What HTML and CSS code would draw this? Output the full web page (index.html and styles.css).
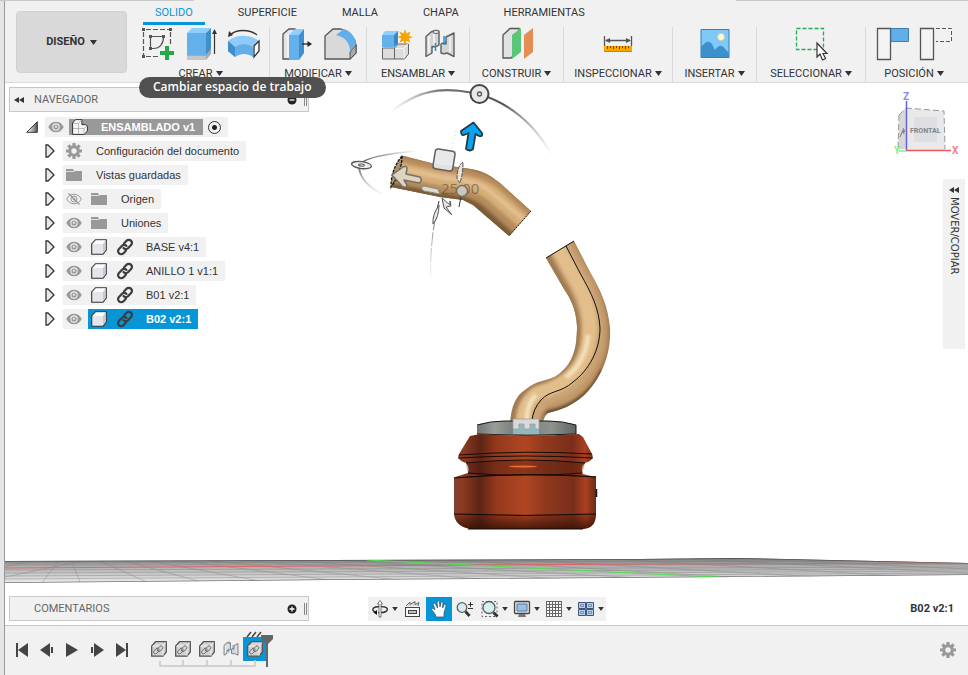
FILE: index.html
```html
<!DOCTYPE html>
<html lang="es">
<head>
<meta charset="utf-8">
<meta name="viewport" content="width=device-width, initial-scale=1">
<title>ENSAMBLADO v1</title>
<link rel="stylesheet" href="styles.css">
</head>
<body>
<svg class="defs" aria-hidden="true">
  <symbol id="caret" viewBox="0 0 7 5"><path d="M0 0h7L3.500 5z" fill="#333"/></symbol>
  <symbol id="rewind" viewBox="0 0 10 6"><path d="M5 0v6L0 3zM10 0v6L5 3z" fill="#333"/></symbol>
  <symbol id="expand" viewBox="0 0 10 14"><path d="M1 1h2l6 6-6 6H1z" fill="#e8e9ee" stroke="#333" stroke-width="1.300"/></symbol>
  <symbol id="eye" viewBox="0 0 16 12"><path d="M.3 6C2 2.500 4.800.7 8 .7s6 1.800 7.700 5.300C14 9.500 11.200 11.300 8 11.300S2 9.500.3 6z" fill="#999"/><circle cx="8" cy="6" r="3.700" fill="#f1f1f1"/><circle cx="8" cy="6" r="2.600" fill="#999"/><circle cx="8" cy="5.800" r="1.200" fill="#e2e2e2"/></symbol>
  <symbol id="eye-off" viewBox="0 0 16 12"><g fill="none" stroke="#999"><path d="M.7 6C2.300 2.800 5 1.200 8 1.200s5.700 1.600 7.300 4.800C13.700 9.200 11 10.800 8 10.800S2.300 9.200.7 6z"/><circle cx="8" cy="6" r="3"/><circle cx="8" cy="6" r="1"/><path d="M2.500.5l11 11" stroke-width="1.300"/></g></symbol>
  <symbol id="folder" viewBox="0 0 16 14"><path d="M0 1h7l1 2H0zM0 4h8l1-1h7v10H0z" fill="#999"/><path d="M0 3.500h8" stroke="#ddd"/></symbol>
  <symbol id="gear" viewBox="0 0 16 16"><g fill="#999"><path d="M6.400 0h3.200v16H6.400zM0 6.400h16v3.200H0z"/><path d="M6.400 0h3.200v16H6.400zM0 6.400h16v3.200H0z" transform="rotate(45 8 8)"/><circle cx="8" cy="8" r="5.800"/></g><circle cx="8" cy="8" r="2.700" fill="#f1f1f1"/></symbol>
  <symbol id="body" viewBox="0 0 16 16"><path d="M.7 15.300V5L4.500.7h10.800V11L12 15.300z" fill="#e4e6ec" stroke="#333" stroke-width="1.100"/><path d="M1.500 5L5 1.500h9.500L11.500 5z" fill="#fff"/><path d="M12 5l2.700-3.500v9.200L12 14z" fill="#c6cad3"/></symbol>
  <symbol id="link" viewBox="0 0 18 18"><g fill="none" stroke="#3d3d3d" stroke-width="2.200" stroke-linecap="round"><path d="M8 5.500l2.500-2.700a3.100 3.100 0 0 1 4.600 4.300L12 10.300a3.100 3.100 0 0 1-4.500-.3"/><path d="M10 12.500l-2.500 2.700a3.100 3.100 0 0 1-4.600-4.300L6 7.700a3.100 3.100 0 0 1 4.500.3"/></g></symbol>
  <symbol id="component" viewBox="0 0 16 16"><path d="M.7 15.200V5L4.500.7h10.800V11L12 15.200z" fill="#d4d4d4" stroke="#555" stroke-width="1.300"/><path d="M12 5l3-3.500M1.500 5H12v10" stroke="#f5f5f5" fill="none" stroke-width=".8"/><g fill="none" stroke="#666" stroke-width=".9"><rect x="-2" y="-1.500" width="6.500" height="3.600" rx="1.800" transform="translate(4.300 10.800) rotate(-48)"/><rect x="-2" y="-1.500" width="6.500" height="3.600" rx="1.800" transform="translate(8 8.500) rotate(-48)"/></g></symbol>
  <symbol id="joint" viewBox="0 0 32 32"><g fill="#d4d4d4" stroke="#606060" stroke-width="1.400" stroke-linejoin="round"><path d="M2 28.500V8.500L7 4l4-1.500h2l2 1V17q-3 2.500-7 1.500V25z"/><path d="M30 28.500V5L22 9v7q-2-2-5 0v9q3 1.500 6 0z"/></g><path d="M5 8v17M10 5v12M26 9v15" stroke="#f7f7f7" stroke-width="1.500"/><path d="M11.500 15v8M20 8v9" stroke="#1793e0" stroke-width="1.500"/><ellipse cx="12" cy="4" rx="3" ry="1.500" fill="#eee" stroke="#666"/></symbol>
</svg>

<div class="app">
<header class="ribbon">
  <div class="workspace-wrap">
    <button class="workspace" type="button" aria-describedby="tip">DISEÑO <svg class="caret"><use href="#caret"/></svg></button>
    <div class="tooltip" id="tip" role="tooltip">Cambiar espacio de trabajo</div>
  </div>
  <div class="ribbon-main">
    <nav class="tabs">
      <a class="active" href="#solido">SOLIDO</a><a href="#superficie">SUPERFICIE</a><a href="#malla">MALLA</a><a href="#chapa">CHAPA</a><a href="#herramientas">HERRAMIENTAS</a>
    </nav>
    <div class="groups">
      <section class="group">
        <div class="tools">
          <button type="button" aria-label="Crear boceto"><svg viewBox="0 0 32 32"><g fill="none" stroke="#555" stroke-width="1.200"><path d="M4 1.500h23M1.500 4v23M28.500 4v12M4 28.500h13" stroke-dasharray="5 2"/><path d="M8.500 9v11.500h3M8.500 8.500h13M21.500 9c0 7-4 11.500-10 11.500"/></g><g fill="#555"><path d="M0 0h3v3H0zM27 0h3v3h-3zM0 27h3v3H0zM7 7h3v3H7zM20 7h3v3h-3zM7 19h3v3H7z"/></g><path d="M18 23h5v-5h4v5h5v4h-5v5h-4v-5h-5z" fill="#23a84b"/></svg></button>
          <button type="button" aria-label="Extruir"><svg viewBox="0 0 32 32"><path d="M2 27h19l5-6v5l-5 6H2z" fill="#a9a9a9"/><path d="M2 28h19v4H2z" fill="#c6c6c6"/><path d="M2 5h19v22H2z" fill="#64b0ea"/><path d="M2 5l5-5h19l-5 5z" fill="#8fcfff"/><path d="M21 5l5-5v21l-5 6z" fill="#3e8fcd"/><path d="M29.500 26V3" stroke="#333" stroke-width="1.200"/><path d="M27 6l2.500-5L32 6z" fill="#333"/></svg></button>
          <button type="button" aria-label="Revolución"><svg viewBox="0 0 32 32"><path d="M2 7C8 1 22 1 29 7" fill="none" stroke="#333" stroke-width="1.300"/><path d="M0 9l1-6 4 4z" fill="#333"/><path d="M0 13C8 6 22 6 31 13l-6 6c-5-4-13-4-18 0z" fill="#8fcbfa"/><path d="M0 13l7 6c5-4 13-4 18 0v10c-5-4-13-4-18 0l-7-6z" fill="#62aee8"/><path d="M0 13l7 6v10l-7-6z" fill="#3d8fcc"/><path d="M26 18l5-5v10l-5 6z" fill="#fafafa" stroke="#333" stroke-width="1.300"/></svg></button>
        </div>
        <button class="label" type="button">CREAR <svg class="caret"><use href="#caret"/></svg></button>
      </section>
      <section class="group">
        <div class="tools">
          <button type="button" aria-label="Pulsar/tirar"><svg viewBox="0 0 32 32"><path d="M2 31V6l6-5h6v30z" fill="#e5e5e5" stroke="#555" stroke-width="1.300"/><path d="M7 6v24" stroke="#fff"/><path d="M8 7h10v25H8z" fill="#64b0ea"/><path d="M8 7l6-6h9l-5 6z" fill="#8fcfff"/><path d="M18 7l5-6v24l-5 7z" fill="#3e8fcd"/><path d="M21 16h7" stroke="#222" stroke-width="1.300"/><path d="M26.500 13l4.500 3-4.500 3z" fill="#222"/></svg></button>
          <button type="button" aria-label="Empalme"><svg viewBox="0 0 32 32"><path d="M1 31V8l8-7h8c9 3 14 9 15 16v8l-6 6z" fill="#dcdcdc" stroke="#555" stroke-width="1.300"/><path d="M2 8h11c7 1 12 6 12 15v7H2z" fill="#d9d9d9"/><path d="M12 7l8-6c7 2 11 8 12 15l-6 7c0-8-5-14-14-16z" fill="#62aee8"/><path d="M26 24l6-7v8l-6 6z" fill="#aaa" stroke="#555"/></svg></button>
        </div>
        <button class="label" type="button">MODIFICAR <svg class="caret"><use href="#caret"/></svg></button>
      </section>
      <section class="group">
        <div class="tools">
          <button type="button" aria-label="Nuevo componente"><svg viewBox="0 0 32 32"><path d="M1.500 20h12v11h-12z" fill="#dcdcdc" stroke="#666"/><path d="M13.500 20l4-4h10v10l-4 5h-10z" fill="#dcdcdc" stroke="#666"/><path d="M14 20.500h9v10M23 20l4-4" fill="none" stroke="#f6f6f6"/><path d="M1 7h12v12H1z" fill="#64b0ea"/><path d="M1 7l3-4h14l-5 4z" fill="#8fcfff"/><path d="M13 7l4-4v13l-4 3z" fill="#3888c7"/><path d="M24 1l1.500 4.500 4.200-2-2 4.200L32 9l-4.300 1.500 2 4.200-4.200-2L24 17l-1.500-4.300-4.200 2 2-4.200L16 9l4.300-1.300-2-4.200 4.200 2z" fill="#f5a300"/></svg></button>
          <button type="button" aria-label="Unión"><svg viewBox="0 0 32 32"><use href="#joint" width="32" height="32"/></svg></button>
        </div>
        <button class="label" type="button">ENSAMBLAR <svg class="caret"><use href="#caret"/></svg></button>
      </section>
      <section class="group">
        <div class="tools">
          <button type="button" aria-label="Plano de desfase"><svg viewBox="0 0 32 32"><path d="M2 30V7l7-6.500h9V23l-8 7z" fill="#e2e2e2" stroke="#555" stroke-width="1.300"/><path d="M11 7l9-7v24l-9 7z" fill="#59c67a"/><path d="M23 7l9-7v24l-9 7z" fill="#e58d55"/></svg></button>
        </div>
        <button class="label" type="button">CONSTRUIR <svg class="caret"><use href="#caret"/></svg></button>
      </section>
      <section class="group">
        <div class="tools">
          <button type="button" aria-label="Medir"><svg viewBox="0 0 32 32"><path d="M2.500 8v10M29.500 8v10M4 12.500h24" stroke="#555" stroke-width="1.300"/><path d="M3 12.500l5-2.500v5zM29 12.500l-5-2.500v5z" fill="#555"/><path d="M2 18h28v6H2z" fill="#f8a500"/><path d="M2 23.500h28" stroke="#d98400"/><path d="M5.500 18v3M8.500 18v2M11.500 18v3M14.500 18v2M17.500 18v3M20.500 18v2M23.500 18v3M26.500 18v2" stroke="#704a00"/></svg></button>
        </div>
        <button class="label" type="button">INSPECCIONAR <svg class="caret"><use href="#caret"/></svg></button>
      </section>
      <section class="group">
        <div class="tools">
          <button type="button" aria-label="Insertar imagen"><svg viewBox="0 0 32 32"><path d="M2 1.500h28v28H2z" fill="#80c8fa" stroke="#2f80bd"/><path d="M2 19c7-8 10-7 14 3 6-8 8-3 14 3v4H2z" fill="#3c90cc"/><circle cx="22" cy="9" r="3.500" fill="#fffad5" stroke="#d4cc96" stroke-width=".7"/></svg></button>
        </div>
        <button class="label" type="button">INSERTAR <svg class="caret"><use href="#caret"/></svg></button>
      </section>
      <section class="group">
        <div class="tools">
          <button type="button" aria-label="Seleccionar"><svg viewBox="0 0 32 32"><rect x="1.500" y=".5" width="27" height="21" fill="none" stroke="#25ac54" stroke-width="1.300" stroke-dasharray="4 2"/><path d="M22 15v14l3-3 2.500 6 3-1.500-2.500-5h4z" fill="#fff" stroke="#333" stroke-width="1.200"/></svg></button>
        </div>
        <button class="label" type="button">SELECCIONAR <svg class="caret"><use href="#caret"/></svg></button>
      </section>
      <section class="group">
        <div class="tools">
          <button type="button" aria-label="Capturar posición"><svg viewBox="0 0 32 32"><path d="M.5.500h13v31H.5z" fill="#f4f4f4" stroke="#555" stroke-width="1.300"/><path d="M14 .5h17.500v13H14z" fill="#62aee8" stroke="#3b80b5"/></svg></button>
          <button type="button" aria-label="Revertir posición"><svg viewBox="0 0 32 32"><path d="M.5.500h13v31H.5z" fill="#f4f4f4" stroke="#555" stroke-width="1.300"/><path d="M16 .5h15.500v13H16" fill="none" stroke="#555" stroke-dasharray="4 2"/></svg></button>
        </div>
        <button class="label" type="button">POSICIÓN <svg class="caret"><use href="#caret"/></svg></button>
      </section>
    </div>
  </div>
</header>

<main class="viewport">
  <svg class="scene" viewBox="5 83 963 542" role="img" aria-label="Vista frontal del ensamblado">
    <defs>
      <linearGradient id="red" x1="0" x2="1" y1="0" y2="0"><stop offset="0" stop-color="#7e4535"/><stop offset=".06" stop-color="#8e3920"/><stop offset=".18" stop-color="#5b2516"/><stop offset=".3" stop-color="#96391c"/><stop offset=".5" stop-color="#b04622"/><stop offset=".65" stop-color="#8f381d"/><stop offset=".84" stop-color="#7a2e1a"/><stop offset=".93" stop-color="#aa4120"/><stop offset="1" stop-color="#6a2919"/></linearGradient>
      <linearGradient id="foot" x1="0" x2="0" y1="0" y2="1"><stop offset="0" stop-color="#2c0c03" stop-opacity=".1"/><stop offset="1" stop-color="#2c0c03" stop-opacity=".75"/></linearGradient>
      <linearGradient id="ring" x1="0" x2="1" y1="0" y2="0"><stop offset="0" stop-color="#737775"/><stop offset=".18" stop-color="#999d98"/><stop offset=".4" stop-color="#777b78"/><stop offset=".75" stop-color="#8e928e"/><stop offset="1" stop-color="#606462"/></linearGradient>
      <linearGradient id="floor" x1="0" x2="0" y1="0" y2="1"><stop offset="0" stop-color="#777"/><stop offset=".3" stop-color="#aaa"/><stop offset="1" stop-color="#f0f0f0"/></linearGradient>
      <linearGradient id="fadeArc" gradientUnits="userSpaceOnUse" x1="391" y1="0" x2="552" y2="0"><stop offset="0" stop-color="#888" stop-opacity="0"/><stop offset=".3" stop-color="#777"/><stop offset=".7" stop-color="#555"/><stop offset="1" stop-color="#777" stop-opacity="0"/></linearGradient>
      <linearGradient id="fadeSide" gradientUnits="userSpaceOnUse" x1="358" y1="0" x2="418" y2="0"><stop offset="0" stop-color="#555"/><stop offset=".3" stop-color="#888"/><stop offset="1" stop-color="#aaa" stop-opacity="0"/></linearGradient>
      <linearGradient id="fadeLow" gradientUnits="userSpaceOnUse" x1="0" y1="165" x2="0" y2="196"><stop offset="0" stop-color="#666"/><stop offset="1" stop-color="#aaa" stop-opacity="0"/></linearGradient>
      <linearGradient id="fadeDown" x1="0" x2="0" gradientUnits="userSpaceOnUse" y1="200" y2="285"><stop offset="0" stop-color="#333"/><stop offset="1" stop-color="#999" stop-opacity="0"/></linearGradient>
      <filter id="soft" x="-10%" y="-10%" width="120%" height="120%"><feGaussianBlur stdDeviation="1.500"/></filter>
      <clipPath id="upper"><path d="M402 155.500L435 164 465 168C482 170 490 175 500 183L531 211 509 236 473 205 463 200 440 197 391 187z"/></clipPath>
      <clipPath id="lower"><path d="M546 258L574 241 590 272C601 291 608 306 610 328C611 347 606 365 597 379C587 395 574 407 548 413Q544 416 543 423H510C511 407 516 395 525 390C539 378 550 382 560 373C574 362 577 345 577 326C576 308 570 298 564 289z"/></clipPath>
      <clipPath id="floorClip"><path d="M5 561L330 560 640 559 735 558 968 563V575L735 577 330 580 5 583z"/></clipPath>
    </defs>

    <g clip-path="url(#floorClip)">
      <path d="M5 557H968V584H5z" fill="url(#floor)"/>
      <g stroke="#777" stroke-width=".6" fill="none" opacity=".65">
        <path d="M5 563L968 561M5 565L968 564M5 570L968 567M5 573L968 569M5 576L968 571M5 579L968 573"/>
        <path d="M5 567L30 561M5 577L82 561M42 583L58 561M80 582L72 561M147 582L100 561M198 581L125 561M260 581L150 561M330 580L175 560M400 580L205 560M480 579L240 560M560 579L280 560M640 578L330 560M730 577L450 560M820 577L520 560M900 576L610 559M968 573L690 559M968 569L750 559"/>
      </g>
      <path d="M5 561L330 560 640 559 735 558 968 563" fill="none" stroke="#555" stroke-width="1.500"/>
      <path d="M5 583L330 580 735 577 968 575" fill="none" stroke="#777" stroke-width="1.500"/>
      <path d="M5 568L330 566 640 564 968 563" stroke="#e06464" fill="none"/>
      <path d="M367 560L735 578" stroke="#4fe04f"/>
    </g>

    <g clip-path="url(#lower)">
      <path d="M500 235H620V430H500z" fill="#a07c54"/>
      <g fill="none" filter="url(#soft)">
        <path d="M560 246L581 284C592 304 596 326 592 348C585 382 562 393 545 397C531 401 527 412 527 428" stroke="#cba474" stroke-width="25"/>
        <path d="M558 248L580 287C590 307 592 326 588 345C581 373 562 386 543 391C528 395 523 411 523 428" stroke="#e2be8b" stroke-width="14"/>
        <path d="M571 242L594 284C604 305 608 325 604 348C596 382 574 399 546 407" stroke="#c29869" stroke-width="5"/>
        <path d="M588 335C587 352 579 368 566 377M528 428C525 414 528 403 536 395" stroke="#f5e5bd" stroke-width="4"/>
        <path d="M603 370C592 397 568 410 546 413" stroke="#6e5130" stroke-width="6"/>
        <path d="M548 259L566 290C574 305 578 320 577 340" stroke="#a17b50" stroke-width="6"/>
      </g>
    </g>
    <path d="M546 258L574 241M566 246L580 273C592 294 599 309 600 328C600 350 589 370 573 382C561 393 550 390 541 400Q533 409 532 421" fill="none" stroke="#111"/>

    <path d="M477 425Q490 421 505 421H548Q563 421 576 425V434Q526 437 477 434z" fill="url(#ring)"/>
    <path d="M477 425Q490 421 505 421H513M539 421H548Q563 421 576 425V434M477 434Q526 437 576 434" fill="none" stroke="#181818"/>
    <path d="M513 419H539V434H513z" fill="#8fbabd"/>
    <path d="M513 419H539V429H535V424H530V429H524V424H519V429H513z" fill="#d9d9d9" stroke="#a0a0a0" stroke-width=".8"/>

    <path d="M470 436L480 434Q526 437 579 434L583 437 592 454Q595 460 585 463Q580 467 583 474L595 477Q526 484 455 477L468 473Q470 467 466 463Q456 460 459 454z" fill="url(#red)"/>
    <path d="M466 464Q526 457 585 463L582 474Q526 479 468 474z" fill="#481a0d" opacity=".35"/>
    <ellipse cx="523" cy="466.500" rx="14" ry="1" fill="#ed6b2e"/>
    <path d="M459 455Q526 450 592 454M458 458Q526 454 593 458M466 463Q526 457 585 463M468 473Q526 478 582 473M454 478Q526 472 596 477" stroke="#180b07" fill="none"/>
    <path d="M454 478Q526 473 596 477V514Q596 528 583 529H470Q455 526 454 514z" fill="url(#red)"/>
    <path d="M454 514H596Q596 528 583 529H470Q455 526 454 514z" fill="url(#foot)"/>
    <path d="M454 478Q526 472 596 477M454 514Q526 517 596 514M468 529H583" fill="none" stroke="#120804"/>
    <path d="M596.500 489v8" stroke="#111" stroke-width="1.500"/>

    <g clip-path="url(#upper)">
      <path d="M385 150H535V240H385z" fill="#8d6a43"/>
      <g fill="none" filter="url(#soft)">
        <path d="M394 169L440 178C468 183 480 184 493 195L525 224" stroke="#b58c5c" stroke-width="28"/>
        <path d="M394 167L440 177C468 181 480 183 493 193L525 221" stroke="#d5ad78" stroke-width="17"/>
        <path d="M399 160L440 169C466 174 482 174 499 187L530 215" stroke="#b98d5d" stroke-width="4"/>
        <path d="M394 167L440 177C466 181 478 181 492 193L523 219" stroke="#e4c291" stroke-width="4"/>
        <path d="M391 187L440 197 463 200 475 206 509 236" stroke="#795b38" stroke-width="8"/>
      </g>
    </g>
    <path d="M531 211L509 236" stroke="#111" stroke-dasharray="2 1"/>
    <path d="M402 156Q402 172 391 187Q391 169 402 156z" fill="#a7906d" stroke="#111" stroke-width="1.300" stroke-dasharray="3 1"/>

    <path d="M391 112C425 84 452 89 479 94C512 104 535 125 552 155" fill="none" stroke="url(#fadeArc)" stroke-width="2.200"/>
    <path d="M418 151C390 153 359 158 359 167" fill="none" stroke="url(#fadeSide)" stroke-width="1.500"/>
    <path d="M359 167C360 181 373 190 386 196" fill="none" stroke="url(#fadeLow)" stroke-width="2"/>
    <path d="M439 201Q429 240 431 285" fill="none" stroke="url(#fadeDown)" stroke-dasharray="14 2"/>
    <path d="M456 131L440 198" stroke="#bbb" stroke-dasharray="1 3" stroke-width=".7"/>
    <circle cx="479.500" cy="94" r="9" fill="#e6e8e9" stroke="#454545" stroke-width="2"/><circle cx="479.500" cy="94" r="2" fill="none" stroke="#555" stroke-width="1.300"/>
    <g transform="rotate(7 361 165)"><ellipse cx="361.500" cy="165" rx="10" ry="3.500" fill="#f0f0f0" stroke="#555" stroke-width="1.300"/><ellipse cx="361.500" cy="165" rx="3" ry="1" fill="none" stroke="#555"/></g>
    <path d="M473.500 122.500L482 133Q483 137 479 136L475.500 134 473 149Q470 152 466 149L468.500 133 464 135Q461 136 461 131z" fill="#08a4f2" stroke="#263947" stroke-width="1.800" stroke-linejoin="round"/>
    <path d="M392 175L403 167Q407 165 407 169L406 174 420 177Q423 181 419 183L404 180 407 185Q406 189 402 186z" fill="#ded3bf" stroke="#777067" stroke-width="1.500" stroke-linejoin="round"/>
    <rect x="434" y="150" width="20" height="20" rx="3" transform="rotate(9 444 160)" fill="#e5e7e8" fill-opacity=".93" stroke="#606060" stroke-width="1.500"/>
    <path d="M424 186L438 189 440 194 424 191Q419 188 424 186z" fill="#e0dacd" stroke="#888"/>
    <path d="M463 162Q457 166 457 179L460 183Q463 174 463 162z" fill="#e5e3dc" stroke="#555" stroke-dasharray="4 1"/>
    <text class="dimension" x="441" y="194">25.00</text>
    <path d="M461 197L459 207" stroke="#333"/><circle cx="462" cy="191" r="5.500" fill="#ccc7bc" stroke="#777067" stroke-width="1.500"/>
    <path d="M442 198L450 205V201L451 206 446 207 452 215 444 208zM439 205Q432 215 433 224Q439 217 439 205z" fill="#e5e5e5" stroke="#555"/>
  </svg>

  <div class="workspace-row">
    <aside class="browser">
      <div class="panel-head">
        <button class="icon-button rewind" type="button" aria-label="Contraer"><svg><use href="#rewind"/></svg></button>
        <h2>NAVEGADOR</h2>
        <button class="icon-button dot" type="button" aria-label="Ocultar"><svg viewBox="0 0 10 10"><circle cx="5" cy="5" r="4.500" fill="#222"/><path d="M2.500 5h5" stroke="#fff" stroke-width="1.300"/></svg></button>
        <span class="grip"></span>
      </div>
      <ul class="tree">
        <li class="root">
          <button class="toggle" type="button" aria-label="Contraer ENSAMBLADO"><svg viewBox="0 0 12 12"><defs><linearGradient id="tri"><stop offset=".2" stop-color="#eee"/><stop offset="1" stop-color="#555"/></linearGradient></defs><path d="M.7 11.300h10.600V.7z" fill="url(#tri)" stroke="#333"/></svg></button>
          <div class="node"><svg class="eye"><use href="#eye"/></svg>
            <span class="document"><svg viewBox="0 0 16 16"><path d="M.6 15.400V4L3.500.6h6.400v5h3.500l2 1.500V12l-3 3.400z" fill="#f3f4f6" stroke="#333"/><path d="M1 4.500h5.500v6M6.500 9.500H12V15M1 9.500h5.500M6.500 4.500l3-3.500M12 9.500l3-2.500M6.500 10v5" fill="none" stroke="#aaa" stroke-width=".8"/></svg><b>ENSAMBLADO v1</b></span>
            <input type="radio" name="active" checked aria-label="Activar ENSAMBLADO v1">
          </div>
        </li>
        <li><button class="toggle" type="button" aria-label="Expandir configuración"><svg><use href="#expand"/></svg></button><div class="node"><svg class="cube"><use href="#gear"/></svg><span class="name">Configuración del documento</span></div></li>
        <li><button class="toggle" type="button" aria-label="Expandir vistas"><svg><use href="#expand"/></svg></button><div class="node"><svg class="folder"><use href="#folder"/></svg><span class="name">Vistas guardadas</span></div></li>
        <li><button class="toggle" type="button" aria-label="Expandir origen"><svg><use href="#expand"/></svg></button><div class="node"><svg class="eye"><use href="#eye-off"/></svg><svg class="folder"><use href="#folder"/></svg><span class="name">Origen</span></div></li>
        <li><button class="toggle" type="button" aria-label="Expandir uniones"><svg><use href="#expand"/></svg></button><div class="node"><svg class="eye"><use href="#eye"/></svg><svg class="folder"><use href="#folder"/></svg><span class="name">Uniones</span></div></li>
        <li><button class="toggle" type="button" aria-label="Expandir BASE"><svg><use href="#expand"/></svg></button><div class="node"><svg class="eye"><use href="#eye"/></svg><svg class="cube"><use href="#body"/></svg><svg class="link"><use href="#link"/></svg><span class="name">BASE v4:1</span></div></li>
        <li><button class="toggle" type="button" aria-label="Expandir ANILLO"><svg><use href="#expand"/></svg></button><div class="node"><svg class="eye"><use href="#eye"/></svg><svg class="cube"><use href="#body"/></svg><svg class="link"><use href="#link"/></svg><span class="name">ANILLO 1 v1:1</span></div></li>
        <li><button class="toggle" type="button" aria-label="Expandir B01"><svg><use href="#expand"/></svg></button><div class="node"><svg class="eye"><use href="#eye"/></svg><svg class="cube"><use href="#body"/></svg><svg class="link"><use href="#link"/></svg><span class="name">B01 v2:1</span></div></li>
        <li class="selected"><button class="toggle" type="button" aria-label="Expandir B02"><svg><use href="#expand"/></svg></button><div class="node"><svg class="eye"><use href="#eye"/></svg><svg class="cube"><use href="#body"/></svg><svg class="link"><use href="#link"/></svg><span class="name">B02 v2:1</span></div></li>
      </ul>
    </aside>
    <div class="right-rail">
      <svg class="view-cube" viewBox="892 88 70 72" role="img" aria-label="Cubo de vistas">
        <path d="M899 115L906 108V149L898 149z" fill="#d8d8d8"/><path d="M906 108L944 111 945 150H906z" fill="#e9e9ea"/>
        <path d="M914 117H937V142H914z" fill="#dddfe3"/>
        <path d="M906 108L944 111 945 149M899 115L906 108M899 115L898 150" stroke="#999" stroke-dasharray="6 3" fill="none"/>
        <path d="M906.500 101V150" stroke="#6464dc" stroke-width="1.500"/><path d="M906 150.500H951" stroke="#eb5a5a" stroke-width="1.500"/><path d="M899 151H906" stroke="#80f080" stroke-width="1.500"/>
        <text x="903" y="100" fill="#8a8af8">Z</text><text x="952" y="154" fill="#f68080">X</text><text x="894" y="154" fill="#80ee80">Y</text>
        <text class="face" x="910" y="133">FRONTAL</text><path d="M900 137l3-7 1 4M903 128l2 4" stroke="#777" fill="none"/>
      </svg>
      <button class="move-panel" type="button"><svg class="rewind-icon"><use href="#rewind"/></svg><span>MOVER/COPIAR</span></button>
    </div>
  </div>

  <div class="status-row">
    <div class="panel-head comments">
      <span class="rewind"></span><h2>COMENTARIOS</h2>
      <button class="icon-button dot" type="button" aria-label="Añadir comentario"><svg viewBox="0 0 10 10"><circle cx="5" cy="5" r="4.500" fill="#222"/><path d="M2.500 5h5M5 2.500v5" stroke="#fff" stroke-width="1.300"/></svg></button>
      <span class="grip"></span>
    </div>
    <div class="nav-tools">
      <button class="split" type="button" aria-label="Orbitar"><svg viewBox="0 0 18 18"><path d="M5 12.500C-1 10 2 6.500 9 6.500S18 9 15 11.500Q12 13 7 12.500" fill="none" stroke="#333" stroke-width="1.400"/><path d="M9 .5L11.500 4H10v13H8V4H6.500z" fill="#fff" stroke="#555" stroke-width=".8"/><path d="M6 10v5l-3.500-2.500z" fill="#111"/></svg><svg class="caret small"><use href="#caret"/></svg></button>
      <button type="button" aria-label="Mirar a"><svg viewBox="0 0 18 18"><path d="M2 6l4-4v2.500l5-3v3l4-2-1 3.500" fill="#ddd" stroke="#666"/><rect x="1.500" y="7.500" width="14" height="9" fill="#f7f7f7" stroke="#444"/><rect x="4.500" y="10.500" width="8" height="3" fill="#b8c0d0" stroke="#444"/></svg></button>
      <button class="current" type="button" aria-label="Encuadre"><svg viewBox="0 0 18 18"><path d="M6 17L5 14 1.500 9.500Q2 7.500 5 9.500L3 4Q4 2 5.500 4L7.500 8 7 2Q8.500 0 9.500 2L10 7 11 2Q13 1 13 3L12.500 8 14.500 4Q16.500 4 16 6L14 13V17z" fill="#fff" stroke="#35576b" stroke-width=".8"/></svg></button>
      <button type="button" aria-label="Zoom"><svg viewBox="0 0 18 18"><circle cx="6" cy="7.500" r="4.800" fill="#d9eaf0" stroke="#52616a" stroke-width="1.300"/><path d="M9.500 11.500l4 4.500" stroke="#333" stroke-width="2.800"/><path d="M12 4.500h5M14.500 2v5M12 8.500h5" stroke="#333"/></svg></button>
      <button class="split" type="button" aria-label="Ajustar"><svg viewBox="0 0 18 18"><path d="M1 1.500h15v15H1z" fill="none" stroke="#666" stroke-dasharray="2 2"/><circle cx="8" cy="7.500" r="6" fill="#d9eeef" stroke="#52616a" stroke-width="1.300"/><path d="M12.500 12.500l4 4" stroke="#333" stroke-width="3"/></svg><svg class="caret small"><use href="#caret"/></svg></button>
      <button class="split" type="button" aria-label="Visualización"><svg viewBox="0 0 18 18"><rect x="1.500" y="1.500" width="15" height="12" rx="1" fill="#e0e3e8" stroke="#444" stroke-width="1.300"/><path d="M4 4h10v7H4z" fill="#9bbde6" stroke="#557aa3"/><path d="M6 14h6l1 3H5z" fill="#777"/></svg><svg class="caret small"><use href="#caret"/></svg></button>
      <button class="split" type="button" aria-label="Rejilla"><svg viewBox="0 0 18 18"><path d="M1 1h16v16H1z" fill="#fafafa"/><path d="M1.500 1v16M4.500 1v16M7.500 1v16M10.500 1v16M13.500 1v16M16.500 1v16M1 1.500h16M1 4.500h16M1 7.500h16M1 10.500h16M1 13.500h16M1 16.500h16" stroke="#666"/></svg><svg class="caret small"><use href="#caret"/></svg></button>
      <button class="split" type="button" aria-label="Ventanas"><svg viewBox="0 0 18 18"><g fill="#b9cee9" stroke="#3c557b"><path d="M1.500 2.500h7v6h-7zM9.500 2.500h7v6h-7zM1.500 9.500h7v6h-7zM9.500 9.500h7v6h-7z"/><path d="M3.500 4.500h3v2h-3zM11.500 4.500h3v2h-3zM3.500 11.500h3v2h-3zM11.500 11.500h3v2h-3z" stroke-width=".5"/></g></svg><svg class="caret small"><use href="#caret"/></svg></button>
    </div>
    <output>B02 v2:1</output>
  </div>
</main>

<footer class="timeline">
  <div class="transport">
    <button type="button" aria-label="Inicio"><svg viewBox="0 0 14 14"><path d="M1 0h2v14H1zM13 0v14L3 7z"/></svg></button>
    <button type="button" aria-label="Atrás"><svg viewBox="0 0 14 14"><path d="M10 0v14L0 7zM11 4h2v6h-2z"/></svg></button>
    <button type="button" aria-label="Reproducir"><svg viewBox="0 0 14 14"><path d="M1 0l12 7-12 7z"/></svg></button>
    <button type="button" aria-label="Adelante"><svg viewBox="0 0 14 14"><path d="M4 0v14l10-7zM1 4h2v6H1z"/></svg></button>
    <button type="button" aria-label="Final"><svg viewBox="0 0 14 14"><path d="M11 0h2v14h-2zM1 0v14l10-7z"/></svg></button>
  </div>
  <div class="history">
    <button type="button" aria-label="BASE"><svg><use href="#component"/></svg></button>
    <button type="button" aria-label="ANILLO 1"><svg><use href="#component"/></svg></button>
    <button type="button" aria-label="B01"><svg><use href="#component"/></svg></button>
    <button type="button" aria-label="Unión rígida"><svg><use href="#joint"/></svg></button>
    <button class="current" type="button" aria-label="B02"><svg><use href="#component"/></svg></button>
    <svg class="marker" viewBox="147 631 128 38" aria-hidden="true"><path d="M160 661v5h95v-6M183 666v-6M207 666v-6M231 666v-6" fill="none" stroke="#c8c8c8" stroke-width="1.500"/><path d="M247 637l4-5M252 637l4-5M257 637l4-5" stroke="#444" stroke-width="1.500"/><path d="M261 635h12v4l-5 5v23h-2v-23l-5-5z" fill="#666"/></svg>
  </div>
  <button class="settings" type="button" aria-label="Preferencias"><svg><use href="#gear"/></svg></button>
</footer>
</div>
</body>
</html>
```
FILE: styles.css
```css
* { box-sizing: border-box; }
html { background: linear-gradient(to right, #e4e5e7 4px, #fff 4px); }
body { margin: 0; color: #333; font: 11px/16px Roboto, sans-serif; }
button { margin: 0; padding: 0; border: 0; color: inherit; background: none; font: inherit; }
a { color: inherit; text-decoration: none; }
svg { display: block; flex: none; overflow: visible; }
h2 { margin: 0; font: inherit; }
.defs { position: absolute; width: 0; height: 0; }
.app { min-height: 100vh; display: flex; flex-direction: column; border-left: 1px solid #999; margin-left: 4px; }
.caret { width: 7px; height: 5px; }
.caret.small { width: 6px; height: 4px; }

/* Ribbon */
.ribbon { display: flex; height: 83px; background: #f1f1f1; border-bottom: 1px solid #d9d9d9; }
.ribbon::before { content: ""; position: absolute; top: 0; left: 0; right: 0; height: 1px; background: linear-gradient(to right, #c8c8c8 20%, transparent 20% 76%, #c8c8c8 76%); }
.workspace-wrap { position: relative; padding: 11px 2px 0 11px; }
.workspace { display: flex; align-items: center; justify-content: center; gap: 5px; width: 111px; height: 62px; border: 1px solid #d1d1d1; border-radius: 4px; background: #d9d9d9; font-weight: 700; }
.tooltip { position: absolute; z-index: 2; top: 77px; left: 134px; padding: 2px 14px 3px; border-radius: 11px; color: #fff; background: #505050; font: 600 12px/16px "Open Sans", sans-serif; white-space: nowrap; }
.ribbon-main { flex: 1; min-width: 0; }
.tabs { display: flex; height: 25px; padding: 3px 0 0 14px; gap: 21px; }
.tabs a { padding: 1px 12px 0; line-height: 17px; border-bottom: 3px solid transparent; }
.tabs .active { color: #0696d7; border-color: #0696d7; }
.groups { display: grid; grid-template-columns: 141fr 97fr 103fr 94fr 109fr 84fr 109fr 102fr; height: 54px; padding-top: 2px; }
.group { display: flex; flex-direction: column; align-items: center; gap: 5px; padding-top: 1px; border-right: 1px solid #d9d9d9; }
.group:first-child { padding-left: 3px; }
.group:last-child { border: 0; padding-right: 6px; }
.tools { display: flex; gap: 11px; }
.tools svg { width: 32px; height: 32px; }
.label { display: flex; align-items: center; gap: 3px; line-height: 17px; white-space: nowrap; }

/* Viewport */
.viewport { position: relative; flex: 1; display: flex; flex-direction: column; padding: 4px; }
.scene { position: absolute; inset: 0; width: 100%; height: 100%; }
.dimension { font: 15px "Open Sans", sans-serif; fill: #544b3e; fill-opacity: .6; }
.workspace-row, .status-row { position: relative; }
.workspace-row { flex: 1; display: flex; justify-content: space-between; }
.browser { width: 300px; }
.panel-head { display: flex; align-items: center; height: 25px; padding-left: 4px; border: 1px solid #c8c8c8; background: #f1f1f1; color: #666; }
.panel-head h2 { flex: 1; }
.rewind { width: 20px; }
.rewind svg { width: 10px; height: 6px; }
.dot svg { width: 10px; height: 10px; }
.grip { width: 3px; height: 12px; margin: 0 1px 0 7px; border: solid #888; border-width: 0 1px; }
.tree { margin: 5px 0 0; padding: 0; list-style: none; display: grid; gap: 4px; font: 11px/20px "Liberation Sans", sans-serif; }
.tree li { display: flex; height: 20px; padding-left: 36px; }
.tree .root { padding-left: 17px; }
.toggle { width: 18px; }
.toggle svg { width: 10px; height: 14px; }
.root .toggle { width: 19px; }
.root .toggle svg { width: 12px; height: 12px; }
.node { display: flex; align-items: center; gap: 9px; padding: 0 7px 0 3px; background: #f1f1f1; }
.eye { width: 16px; height: 12px; }
.folder { width: 16px; height: 14px; }
.cube { width: 16px; height: 16px; }
.link { width: 18px; height: 18px; }
.name { padding-left: 5px; white-space: nowrap; }
.link + .name { padding-left: 3px; }
.root .node { gap: 5px; padding-right: 7px; }
.document { display: flex; align-items: center; gap: 13px; height: 16px; padding: 0 8px 0 3px; color: #fff; background: #999; }
.document svg { width: 16px; height: 16px; }
.tree input { appearance: none; width: 13px; height: 13px; margin: 0; border: 1px solid #333; border-radius: 50%; background: radial-gradient(circle, #222 2px, transparent 3px); }
.selected .node { color: #fff; font-weight: 700; background: linear-gradient(to right, #f1f1f1 25px, #0696d7 25px); }
.right-rail { display: flex; flex-direction: column; align-items: flex-end; }
.view-cube { width: 70px; height: 72px; margin: 1px 2px 0 0; font: 700 10px Roboto, sans-serif; }
.face { font-size: 7px; fill: #80858b; }
.move-panel { display: flex; flex-direction: column; align-items: center; gap: 4px; width: 22px; height: 170px; margin-top: 19px; margin-right: -1px; padding-top: 8px; background: #f1f1f1; }
.move-panel span { writing-mode: vertical-rl; font: 10px/14px "DejaVu Sans", sans-serif; }
.rewind-icon { width: 10px; height: 6px; }
.status-row { display: flex; align-items: center; }
.comments { width: 300px; margin-right: 59px; }
.nav-tools { display: flex; height: 24px; background: #f1f1f1; }
.nav-tools button { display: flex; align-items: center; justify-content: center; width: 26px; gap: 3px; }
.nav-tools .split { width: 32px; }
.nav-tools svg:first-child { width: 18px; height: 18px; }
.current { background: #0696d7; }
.status-row output { margin: 0 10px 0 auto; font-weight: 700; }

/* Timeline */
.timeline { display: flex; height: 50px; border-top: 1px solid #c8c8c8; background: #f1f1f1; }
.transport { display: flex; padding-left: 4px; }
.transport button { display: grid; place-items: center; width: 25px; height: 48px; }
.transport svg { width: 14px; height: 14px; fill: #444; }
.history { position: relative; display: flex; margin-left: 13px; padding-top: 11px; }
.history button { display: grid; place-items: center; width: 24px; height: 24px; }
.history button svg { width: 16px; height: 16px; }
.history .marker { position: absolute; top: 5px; left: 0; width: 128px; height: 38px; }
.settings { margin: 0 12px 2px auto; }
.settings svg { width: 16px; height: 16px; }
```
